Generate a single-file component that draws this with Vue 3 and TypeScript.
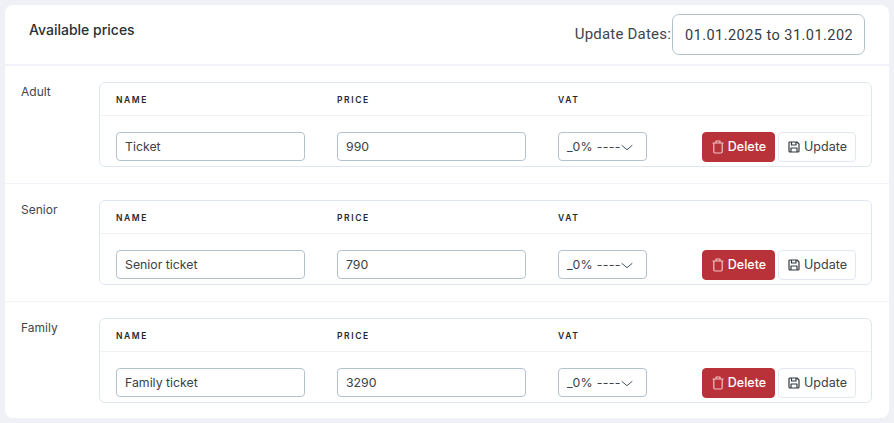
<script setup lang="ts">
interface Price { group: string; name: string; price: string }
const prices: Price[] = [
  { group: 'Adult', name: 'Ticket', price: '990' },
  { group: 'Senior', name: 'Senior ticket', price: '790' },
  { group: 'Family', name: 'Family ticket', price: '3290' },
]
</script>

<template>
  <div class="page">
    <section class="card">
      <header class="head">
        <h2 class="title">Available prices</h2>
        <div class="dates">
          <label class="dates-label">Update Dates:</label>
          <input class="dates-input" value="01.01.2025 to 31.01.2025" readonly />
        </div>
      </header>
      <div v-for="p in prices" :key="p.group" class="row">
        <div class="group">{{ p.group }}</div>
        <div class="box">
          <div class="cols labels">
            <span>NAME</span>
            <span>PRICE</span>
            <span>VAT</span>
          </div>
          <div class="cols fields">
            <input class="field" :value="p.name" />
            <input class="field" :value="p.price" />
            <div class="select">
              <span>_0% ----</span>
              <svg width="12" height="12" viewBox="0 0 12 12" fill="none" stroke="#4a5560" stroke-width="1" stroke-linecap="round" stroke-linejoin="round"><path d="M1 4.500l5 4.200 5-4.200" /></svg>
            </div>
            <div class="actions">
              <button class="btn danger">
                <svg width="14" height="14" viewBox="0 0 14 14" fill="none" stroke="#f0c4c6" stroke-width="1.2" stroke-linejoin="round"><path d="M1.500 3h11M5 3V1h4v2M2.800 3v8.800c0 .7.500 1.200 1.200 1.200h6c.7 0 1.200-.5 1.200-1.200V3" /></svg>
                Delete
              </button>
              <button class="btn light">
                <svg width="14" height="14" viewBox="0 0 14 14" fill="none" stroke="#33393f" stroke-width="1.2" stroke-linejoin="round"><path d="M2 3a1 1 0 0 1 1-1h7l2 2v7a1 1 0 0 1-1 1H3a1 1 0 0 1-1-1zM4.500 2v3h4.500V2M4 12V8h6v4" /></svg>
                Update
              </button>
            </div>
          </div>
        </div>
      </div>
    </section>
  </div>
</template>

<style>
html, body { margin: 0; background: #eff1f7; }
</style>

<style scoped>
.page {
  padding: 5px;
  height: 423px;
  box-sizing: border-box;
  font-family: Inter, "Noto Sans", sans-serif;
  color: #333a41;
}
.card {
  background: #fff;
  border-radius: 8px;
  height: 413px;
  box-sizing: border-box;
  overflow: hidden;
}
.head {
  height: 61px;
  box-sizing: border-box;
  display: flex;
  justify-content: space-between;
  align-items: flex-start;
  padding: 9px 24px 0 24px;
  border-bottom: 2px solid #f1f3f8;
}
.title {
  margin: 7px 0 0;
  font-size: 14px;
  font-weight: 500;
  line-height: 18px;
  color: #2b3036;
}
.dates { display: flex; align-items: center; gap: 1px; }
.dates-label { font-family: Roboto, sans-serif; font-size: 15px; color: #3f464d; letter-spacing: 0.2px; padding-bottom: 2px; }
.dates-input {
  width: 193px;
  height: 41px;
  box-sizing: border-box;
  padding: 1px 12px 0;
  border: 1px solid #b3c3ce;
  border-radius: 7px;
  font-family: Roboto, sans-serif;
  font-size: 14.500px;
  letter-spacing: 0.46px;
  color: #353b42;
  background: #fff;
  outline: none;
}
.row {
  height: 118px;
  box-sizing: border-box;
  display: flex;
  padding: 16px 17px 0 16px;
  border-bottom: 1px solid #f1f3f8;
}
.row:last-child { border-bottom: 0; }
.group {
  width: 78px;
  font-size: 12px;
  line-height: 18px;
  padding-top: 1px;
  color: #3f464d;
}
.box {
  width: 773px;
  height: 85px;
  box-sizing: border-box;
  border: 1px solid #dfe6f1;
  border-radius: 6px;
}
.cols {
  display: grid;
  column-gap: 32px;
  padding: 0 16px;
}
.labels {
  height: 31px;
  padding-top: 1px;
  align-items: center;
  border-bottom: 1px solid #f0f2f6;
  font-size: 8.500px;
  font-weight: 600;
  letter-spacing: 1.600px;
  color: #23282e;
  grid-template-columns: 189px 189px 1fr;
}
.fields { padding-top: 16px; grid-template-columns: 189px 189px 89px 1fr; }
.field {
  width: 189px;
  height: 29px;
  box-sizing: border-box;
  padding: 0 8px;
  border: 1px solid #b3c3ce;
  border-radius: 4px;
  font-family: Inter, sans-serif;
  font-size: 12.300px;
  color: #3b4148;
  background: #fff;
  outline: none;
}
.select {
  width: 89px;
  height: 29px;
  box-sizing: border-box;
  border: 1px solid #b3c3ce;
  border-radius: 4px;
  padding: 0 8px;
  display: flex;
  align-items: center;
  font-size: 12.300px;
  letter-spacing: 0.35px;
  color: #3b4148;
}
.actions { display: flex; gap: 3px; justify-content: flex-end; margin-right: -1px; }
.btn {
  height: 30px;
  box-sizing: border-box;
  display: inline-flex;
  align-items: center;
  justify-content: center;
  gap: 3px;
  border-radius: 4px;
  font-family: Inter, sans-serif;
  font-size: 12.500px;
  padding: 0 0 1px;
}
.danger { width: 73px; background: #b93239; border: 1px solid #b93239; color: #fff; font-weight: 500; }
.light { width: 78px; background: #fff; border: 1px solid #e2e8f2; color: #3b4148; }
</style>
